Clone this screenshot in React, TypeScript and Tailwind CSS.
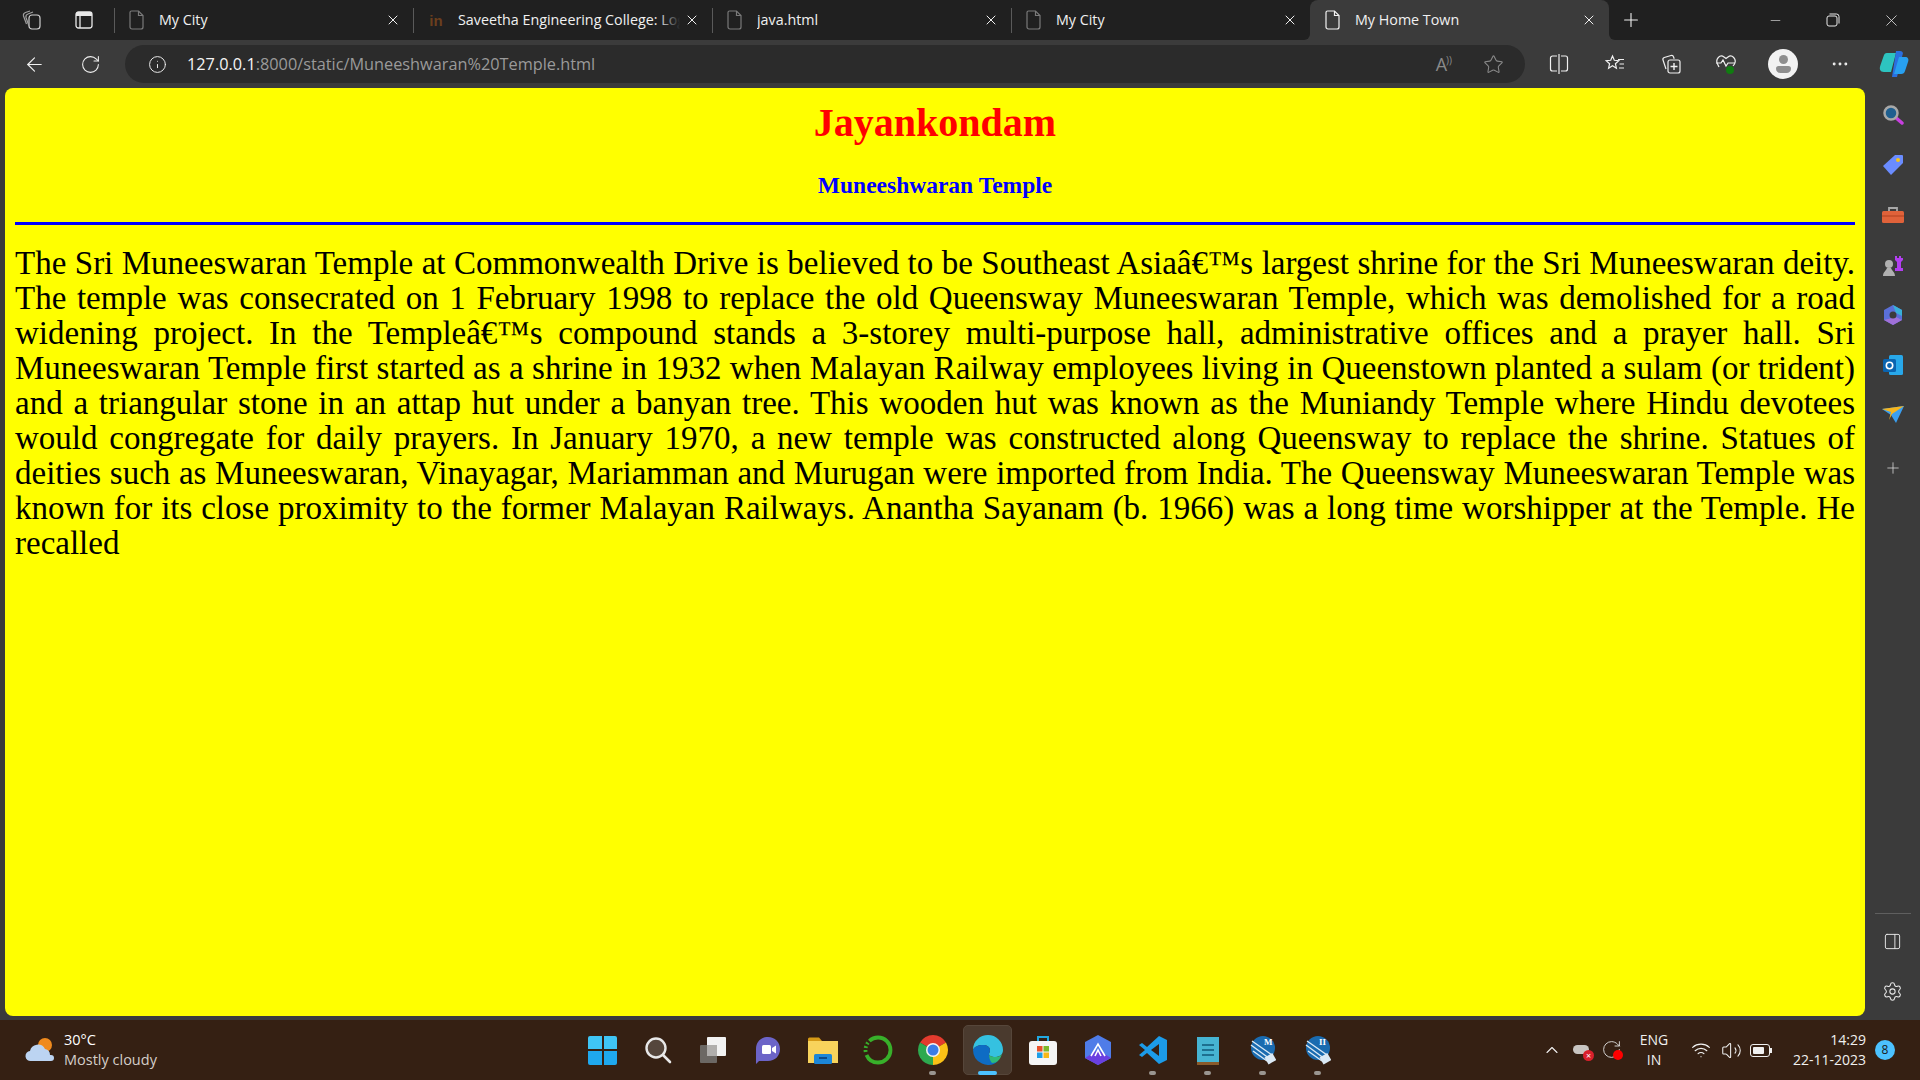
import React from "react";
import { ArrowLeft, RotateCw, Info, Star, X, Plus, Minus, ChevronUp, Wifi, Volume2, Ellipsis, Settings, PanelRight } from "lucide-react";

const ui = "font-['Open_Sans','Noto_Sans',sans-serif]";

const lines = [
  "The Sri Muneeswaran Temple at Commonwealth Drive is believed to be Southeast Asiaâ€™s largest shrine for the Sri Muneeswaran deity.",
  "The temple was consecrated on 1 February 1998 to replace the old Queensway Muneeswaran Temple, which was demolished for a road",
  "widening project. In the Templeâ€™s compound stands a 3-storey multi-purpose hall, administrative offices and a prayer hall. Sri",
  "Muneeswaran Temple first started as a shrine in 1932 when Malayan Railway employees living in Queenstown planted a sulam (or trident)",
  "and a triangular stone in an attap hut under a banyan tree. This wooden hut was known as the Muniandy Temple where Hindu devotees",
  "would congregate for daily prayers. In January 1970, a new temple was constructed along Queensway to replace the shrine. Statues of",
  "deities such as Muneeswaran, Vinayagar, Mariamman and Murugan were imported from India. The Queensway Muneeswaran Temple was",
  "known for its close proximity to the former Malayan Railways. Anantha Sayanam (b. 1966) was a long time worshipper at the Temple. He",
];

const DocIcon = ({ active }: { active?: boolean }) => (
  <svg width="16" height="20" viewBox="0 0 16 20" fill="none" stroke={active ? "#f2f2f2" : "#7a7a7a"} strokeWidth="1.2">
    <path d="M2.5 1h7l4.500 4.500V17a2 2 0 0 1-2 2H3a2 2 0 0 1-2-2V2.500A1.500 1.500 0 0 1 2.500 1z" />
    <path d="M9.500 1v4.500H14" />
  </svg>
);

const Tab = ({ title, active, sep = true, fade, icon }: { title: string; active?: boolean; sep?: boolean; fade?: boolean; icon?: React.ReactNode }) => (
  <div className={`relative w-[299px] h-[40px] shrink-0 ${active ? "bg-[#202020]" : ""}`}>
    <div className={`relative flex items-center h-full pl-[15px] pr-[12px] ${active ? "bg-[#3b3b3b] rounded-t-[8px]" : ""}`}>
      {sep && <div className="absolute left-0 top-[8px] h-[25px] w-px bg-[#5a5a5a]" />}
      <div className="w-[16px] flex justify-center shrink-0">{icon ?? <DocIcon active={active} />}</div>
      <div className="relative flex-1 ml-[14px] overflow-hidden whitespace-nowrap text-[14.300px] text-[#f0f0f0]">
        {title}
        {fade && <div className="absolute right-0 top-0 h-full w-[22px] bg-gradient-to-r from-transparent to-[#202020]" />}
      </div>
      <X size={16} strokeWidth={1.500} className="shrink-0 ml-[4px] text-[#f0f0f0]" />
    </div>
  </div>
);

const Sq = ({ children, w = 22, h = 22 }: { children: React.ReactNode; w?: number; h?: number }) => (
  <svg width={w} height={h} viewBox={`0 0 ${w} ${h}`} fill="none">{children}</svg>
);

const Side = ({ children }: { children: React.ReactNode }) => (
  <div className="h-[50px] flex items-center justify-center">{children}</div>
);

const Cell = ({ children, dot, active }: { children: React.ReactNode; dot?: boolean; active?: boolean }) => (
  <div className="relative w-[55px] h-[54px] flex items-center justify-center shrink-0">
    {active && <div className="absolute left-[3px] top-[2px] w-[49px] h-[50px] rounded-[5px] bg-[#4a3a2e] border border-[#56463a]" />}
    <div className="relative">{children}</div>
    {dot && <div className="absolute left-[24px] bottom-[2px] w-[7px] h-[4px] rounded-full bg-[#9a9590]" />}
    {active && <div className="absolute left-[18px] bottom-[2px] w-[19px] h-[4px] rounded-full bg-[#4cc2ff]" />}
  </div>
);

export default function App() {
  return (
    <div className={`w-[1920px] h-[1080px] overflow-hidden flex flex-col bg-[#3b3b3b] ${ui}`}>
      {/* Tab strip */}
      <div className="h-[40px] flex shrink-0">
        <div className="flex bg-[#202020] rounded-br-[6px]">
          <div className="w-[114px] flex items-center shrink-0">
            <div className="w-[64px] flex justify-center">
              <Sq>
                <rect x="8" y="6" width="11" height="14" rx="3" stroke="#d0d0d0" strokeWidth="1.200" />
                <path d="M8 17 5 8.500a3 3 0 0 1 2-3.500l5-2M5.500 15 2.500 7a3 3 0 0 1 2-3.500L9 2" stroke="#a0a0a0" strokeWidth="1.200" />
              </Sq>
            </div>
            <div className="w-[40px] flex justify-center">
              <Sq w={20} h={20}>
                <rect x="2" y="2" width="16" height="16" rx="2.500" stroke="#e8e8e8" strokeWidth="1.300" />
                <path d="M2 3.500a1.500 1.500 0 0 1 1.500-1.500h13a1.500 1.500 0 0 1 1.500 1.500V6H2z" fill="#e8e8e8" />
                <path d="M6 6v12" stroke="#e8e8e8" strokeWidth="1.300" />
              </Sq>
            </div>
          </div>
          <Tab title="My City" />
          <Tab
            title="Saveetha Engineering College: Login"
            fade
            icon={<span className="font-['Liberation_Sans',sans-serif] font-bold text-[15px] text-[#6b3f1d] leading-none">in</span>}
          />
          <Tab title="java.html" />
          <Tab title="My City" />
        </div>
        <Tab title="My Home Town" active sep={false} />
        <div className="flex-1 flex bg-[#202020] rounded-bl-[6px]">
          <div className="w-[44px] flex items-center justify-center shrink-0">
            <Plus size={22} strokeWidth={1.200} className="text-[#f0f0f0]" />
          </div>
          <div className="flex-1 flex items-center justify-end text-[#e8e8e8]">
            <div className="w-[58px] flex justify-center"><Minus size={15} strokeWidth={1} /></div>
            <div className="w-[58px] flex justify-center">
              <Sq w={14} h={14}>
                <rect x="1" y="3" width="10" height="10" rx="2" stroke="#e8e8e8" />
                <path d="M3.500 1h7A2.500 2.500 0 0 1 13 3.500v7" stroke="#e8e8e8" />
              </Sq>
            </div>
            <div className="w-[58px] flex justify-center"><X size={19} strokeWidth={1} /></div>
          </div>
        </div>
      </div>

      {/* Toolbar */}
      <div className="h-[48px] flex items-center shrink-0 text-[#f0f0f0]">
        <div className="w-[56px] ml-[6px] flex justify-center"><ArrowLeft size={23} strokeWidth={1.200} /></div>
        <div className="w-[56px] flex justify-center"><RotateCw size={21} strokeWidth={1.200} /></div>
        <div className="w-[1400px] ml-[7px] h-[38px] rounded-full bg-[#2b2b2b] flex items-center pl-[23px] pr-[21px] shrink-0">
          <Info size={19} strokeWidth={1.200} />
          <div className="ml-[20px] text-[16.300px] whitespace-nowrap text-[#9a9a9a]">
            <span className="text-[#f5f5f5]">127.0.0.1</span>:8000/static/Muneeshwaran%20Temple.html
          </div>
          <div className="ml-auto flex items-center gap-[31px] text-[#8a8a8a]">
            <div className="flex items-start text-[18px] leading-none">A<span className="text-[10px] -ml-[1px]">))</span></div>
            <Star size={21} strokeWidth={1.200} />
          </div>
        </div>
        <div className="flex items-center flex-1">
          <div className="w-[56px] ml-[6px] flex justify-center">
            <Sq>
              <path d="M9 3H4.500A2 2 0 0 0 2.500 5v11a2 2 0 0 0 2 2H9M13 3h4.500a2 2 0 0 1 2 2v11a2 2 0 0 1-2 2H13M11 1v20" stroke="#f0f0f0" strokeWidth="1.200" />
            </Sq>
          </div>
          <div className="w-[56px] flex justify-center">
            <Sq>
              <path d="M8.500 3l1.800 4.300 4.500.4-3.400 3 1 4.500-3.900-2.400-3.900 2.400 1-4.500-3.400-3 4.500-.4z" stroke="#f0f0f0" strokeWidth="1.200" />
              <path d="M14 6.500h6M15.500 11h4.500M15 15h5" stroke="#f0f0f0" strokeWidth="1.200" />
            </Sq>
          </div>
          <div className="w-[56px] flex justify-center">
            <Sq>
              <path d="M6 16 3 7a2 2 0 0 1 1.300-2.500L11 2.500a2 2 0 0 1 2.500 1.300l.7 2" stroke="#f0f0f0" strokeWidth="1.200" />
              <rect x="8" y="7" width="12" height="13" rx="2" stroke="#f0f0f0" strokeWidth="1.200" />
              <path d="M14 10v7M10.500 13.500h7" stroke="#f0f0f0" strokeWidth="1.400" />
            </Sq>
          </div>
          <div className="w-[54px] flex justify-center">
            <Sq>
              <path d="M4 14 2.500 11C0 6 5 1 9 4l2 1.500L13 4c4-3 9 2 6.500 7L18 13" stroke="#f0f0f0" strokeWidth="1.200" />
              <path d="M1 10h5l2-3 3 6 2-3h7" stroke="#f0f0f0" strokeWidth="1.200" />
              <circle cx="15" cy="17" r="4" fill="#107c10" />
            </Sq>
          </div>
          <div className="w-[30px] h-[30px] ml-[15px] rounded-full bg-[#f2f2f2] flex flex-col items-center justify-center gap-[2px]">
            <div className="w-[9px] h-[9px] rounded-full bg-[#8e8e8e]" />
            <div className="w-[15px] h-[7px] rounded-t-[3px] rounded-b-[5px] bg-[#8e8e8e]" />
          </div>
          <div className="w-[56px] ml-[14px] flex justify-center"><Ellipsis size={20} strokeWidth={1.500} /></div>
          <div className="w-[30px] ml-[11px] flex justify-center">
            <Sq w={30} h={28}>
              <path d="M8 3h9l-5 19H5C1 22 0 19 1.500 15L5 5a3 3 0 0 1 3-2z" fill="#2dc4c0" />
              <path d="M17 1h4a3 3 0 0 1 3 2l-6 24h-5z" fill="#2a6fe0" />
              <path d="M20 7h6c3 0 4 2 3 5l-3 9a4 4 0 0 1-4 3h-7z" fill="#28a0f0" />
            </Sq>
          </div>
        </div>
      </div>

      {/* Page + sidebar */}
      <div className="flex h-[928px] shrink-0">
        <div className="w-[1860px] ml-[5px] rounded-[8px] bg-[#ffff00] px-[10px] font-['Liberation_Serif',serif] overflow-hidden">
          <h1 className="text-center font-bold text-[#ff0000] text-[40px] leading-[44px] mt-[13px]">Jayankondam</h1>
          <h2 className="text-center font-bold text-[#0000ff] text-[23.500px] leading-[28px] mt-[26px]">Muneeshwaran Temple</h2>
          <div className="h-[3px] bg-[#0000ff] mt-[23px]" />
          <div className="mt-[21px] text-[33px] leading-[35px] text-black">
            {lines.map((l) => (
              <div key={l} className="text-justify [text-align-last:justify] whitespace-nowrap">{l}</div>
            ))}
            <div>recalled</div>
          </div>
        </div>
        <div className="flex-1 flex flex-col items-center pt-[2px]">
          <Side>
            <Sq>
              <path d="m13 13 7 6" stroke="#c83fe0" strokeWidth="3.500" strokeLinecap="round" />
              <circle cx="9" cy="9" r="6.500" fill="#1f5f8f" stroke="#a8a8a8" strokeWidth="2.500" />
            </Sq>
          </Side>
          <Side>
            <Sq>
              <path d="M13 1h7a1 1 0 0 1 1 1v7L9 21 1 12z" fill="#6a8cff" />
              <circle cx="16" cy="6" r="2" fill="#f5c518" />
            </Sq>
          </Side>
          <Side>
            <Sq w={24} h={22}>
              <path d="M8 7V4h8v3" stroke="#a8a8a8" strokeWidth="1.800" />
              <rect x="1" y="7" width="22" height="12" rx="1.500" fill="#e0623a" />
              <path d="M1 12h22" stroke="#b0401f" />
            </Sq>
          </Side>
          <Side>
            <Sq w={24} h={24}>
              <circle cx="8" cy="11" r="4" fill="#b0b0b0" />
              <path d="M2 23c0-4 3-5 4-8h4c1 3 4 4 4 8z" fill="#b0b0b0" />
              <path d="M14 3h2v2h2V3h2v2h2V3v0h0v4l-2 2v6h2v3H14v-3h2V9l-2-2z" fill="#b23ff0" />
            </Sq>
          </Side>
          <Side>
            <Sq>
              <path d="M11 1 20 6v10l-9 5-9-5V6z" fill="#5a6fd8" />
              <path d="M11 1 20 6v6l-6-3z" fill="#38b0d8" />
              <path d="M2 16l9 5 9-5-6-3z" fill="#a070d8" />
              <circle cx="11" cy="11" r="3.500" fill="#3b3b3b" />
            </Sq>
          </Side>
          <Side>
            <Sq>
              <rect x="7" y="1" width="14" height="20" rx="1.500" fill="#28a8ea" />
              <rect x="1" y="5" width="13" height="13" rx="1.500" fill="#0a64b0" />
              <circle cx="7.500" cy="11.500" r="3.200" stroke="#fff" strokeWidth="1.600" />
            </Sq>
          </Side>
          <Side>
            <Sq>
              <path d="M0 5 22 2 14 19 9 11z" fill="#3a9ff0" />
              <path d="M0 5 9 8l-2 8 3-6 12-8z" fill="#f5b51e" />
            </Sq>
          </Side>
          <div className="h-[50px] mt-[3px] flex items-center justify-center"><Plus size={18} strokeWidth={1} className="text-[#e0e0e0]" /></div>
          <div className="mt-auto w-[36px] h-px bg-[#5f5f5f]" />
          <div className="h-[50px] mt-[2px] flex items-center"><PanelRight size={19} strokeWidth={1.200} className="text-[#e8e8e8]" /></div>
          <div className="h-[50px] flex items-center"><Settings size={21} strokeWidth={1.200} className="text-[#e8e8e8]" /></div>
        </div>
      </div>

      <div className="h-[4px] shrink-0" />

      {/* Taskbar */}
      <div className="flex-1 bg-[#352013] flex items-center text-white relative">
        <div className="w-[575px] flex items-center pl-[24px] shrink-0">
          <Sq w={32} h={30}>
            <circle cx="21" cy="10" r="7" fill="#f08a1d" />
            <path d="M7 26a5 5 0 0 1-1-10 8 8 0 0 1 15-2 6 6 0 0 1 5 6h1a3 3 0 0 1 0 6z" fill="#bcd4f2" />
          </Sq>
          <div className="ml-[8px] text-[14.500px] leading-[20px]">
            <div>30°C</div>
            <div className="text-[#d4cec9]">Mostly cloudy</div>
          </div>
        </div>
        <div className="flex">
          <Cell>
            <div className="grid grid-cols-2 gap-[2px] w-[29px] h-[29px]">
              <div className="bg-[#3fc5f5] rounded-tl-[2px]" />
              <div className="bg-[#3fc5f5] rounded-tr-[2px]" />
              <div className="bg-[#1fa8ee] rounded-bl-[2px]" />
              <div className="bg-[#1fa8ee] rounded-br-[2px]" />
            </div>
          </Cell>
          <Cell>
            <Sq w={28} h={28}>
              <circle cx="12" cy="12" r="9.500" fill="#55463c" stroke="#e8e8e8" strokeWidth="2.400" />
              <path d="m19 19 7 7" stroke="#e8e8e8" strokeWidth="2.600" strokeLinecap="round" />
            </Sq>
          </Cell>
          <Cell>
            <Sq w={30} h={28}>
              <rect x="2" y="9" width="17" height="18" rx="1" fill="#6c6864" />
              <rect x="9" y="1" width="19" height="19" rx="1" fill="#f2f2f2" />
              <rect x="9" y="9" width="10" height="11" fill="#b0aeac" />
            </Sq>
          </Cell>
          <Cell>
            <Sq w={28} h={30}>
              <path d="M14 2c7 0 12 5 12 12s-5 12-12 12H5l-3 3v-15C2 7 7 2 14 2z" fill="#6c64c8" />
              <rect x="8" y="10" width="9" height="9" rx="1.500" fill="#fff" />
              <path d="m18 13 4-2.500v8L18 16z" fill="#fff" />
            </Sq>
          </Cell>
          <Cell>
            <Sq w={30} h={28}>
              <path d="M0 3a1.500 1.500 0 0 1 1.500-1.500H11L14 5H0z" fill="#d69a16" />
              <rect x="0" y="5" width="30" height="22" fill="#f8d35c" />
              <rect x="6" y="18" width="18" height="10" rx="1.500" fill="#1c86d8" />
              <path d="M11 22h8" stroke="#0c4a8a" strokeWidth="2" />
            </Sq>
          </Cell>
          <Cell>
            <Sq w={30} h={30}>
              <circle cx="15" cy="15" r="12.500" stroke="#38b02a" strokeWidth="3.800" strokeDasharray="34 3 2 2 2 2 2 2" />
            </Sq>
          </Cell>
          <Cell dot>
            <Sq w={30} h={30}>
              <path d="M15 15 27.990 7.500A15 15 0 0 0 2.010 7.500z" fill="#e33b2e" />
              <path d="M15 15 2.010 7.500A15 15 0 0 0 15 30z" fill="#2da94f" />
              <path d="M15 15 27.990 7.500A15 15 0 0 1 15 30z" fill="#fbc116" />
              <circle cx="15" cy="15" r="7" fill="#f5f5f5" />
              <circle cx="15" cy="15" r="5.500" fill="#3b7de8" />
            </Sq>
          </Cell>
          <Cell active>
            <Sq w={30} h={30}>
              <path d="M15 0a15 15 0 0 1 15 15c0 5-4 7-8 7-3 0-6-1-6-3 0-1 1-2 1-4 0-3-3-5-7-5C5 10 1 12 0 15 0 6 7 0 15 0z" fill="#35c1e0" />
              <path d="M0 15c1-3 5-5 10-5 4 0 7 2 7 5 0 2-1 3-1 4 0 5 5 8 9 7a15 15 0 0 1-25-11z" fill="#0e6cc4" />
              <path d="M16 19c0 2 3 3 6 3 3 0 6-1 7-3-2 6-5 9-10 9-2-2-3-5-3-9z" fill="#2dbb7a" />
            </Sq>
          </Cell>
          <Cell>
            <Sq w={30} h={32}>
              <path d="M10 7V3h10v4" stroke="#22a8e0" strokeWidth="2" />
              <rect x="1" y="7" width="28" height="24" rx="3" fill="#f5f5f5" />
              <rect x="9" y="12" width="5.500" height="5.500" fill="#e8512a" />
              <rect x="15.500" y="12" width="5.500" height="5.500" fill="#7db82a" />
              <rect x="9" y="18.500" width="5.500" height="5.500" fill="#1e9fe8" />
              <rect x="15.500" y="18.500" width="5.500" height="5.500" fill="#f8b816" />
            </Sq>
          </Cell>
          <Cell>
            <Sq w={28} h={30}>
              <path d="M14 0 27 7v16l-13 7-13-7V7z" fill="#4f7ce8" />
              <path d="M14 15 27 23l-13 7-13-7z" fill="#6a3fe0" />
              <path d="m7 21 7-12 7 12M11 21l3-6 3 6" stroke="#fff" strokeWidth="1.600" />
            </Sq>
          </Cell>
          <Cell dot>
            <Sq w={30} h={30}>
              <path d="M21 1 29 5v20l-8 4-12-11-5 4-3-2 6-5-6-5 3-2 5 4z" fill="#1c9be8" />
              <path d="M21 9v12l-8-6z" fill="#352013" />
            </Sq>
          </Cell>
          <Cell dot>
            <Sq w={24} h={30}>
              <rect x="1" y="2" width="22" height="25" fill="#46b4d2" />
              <rect x="1" y="27" width="22" height="3" fill="#8a5a2a" />
              <path d="M6 10h12M6 15h12M6 20h12" stroke="#1d6f8f" strokeWidth="2" />
            </Sq>
          </Cell>
          <Cell dot>
            <Sq w={26} h={30}>
              <circle cx="13" cy="13" r="12" fill="#1a6bb0" />
              <path d="M1 10 20 24M3 16l14 10M2 6l20 14" stroke="#dbe9f5" strokeWidth="1.400" />
              <text x="14" y="10" fontSize="9" fontWeight="700" fontFamily="Liberation Serif" fill="#fff">M</text>
              <rect x="16" y="20" width="9" height="8" fill="#dbe9f5" transform="rotate(-30 20 24)" />
            </Sq>
          </Cell>
          <Cell dot>
            <Sq w={26} h={30}>
              <circle cx="13" cy="13" r="12" fill="#1a6bb0" />
              <path d="M1 10 20 24M3 16l14 10M2 6l20 14" stroke="#dbe9f5" strokeWidth="1.400" />
              <text x="14" y="10" fontSize="9" fontWeight="700" fontFamily="Liberation Serif" fill="#fff">II</text>
              <rect x="16" y="20" width="9" height="8" fill="#dbe9f5" transform="rotate(-30 20 24)" />
            </Sq>
          </Cell>
        </div>
        <div className="flex-1 flex items-center pl-[197px]">
          <ChevronUp size={20} strokeWidth={1.300} className="shrink-0 text-[#f0f0f0]" />
          <div className="relative ml-[11px] w-[20px] h-[18px] shrink-0">
            <div className="absolute left-0 top-[4px] w-[16px] h-[9px] rounded-full bg-[#c9c5c2]" />
            <div className="absolute right-[-1px] bottom-[-2px] w-[11px] h-[11px] rounded-full bg-[#d9202c] text-[9px] leading-[11px] text-center text-white">×</div>
          </div>
          <div className="relative ml-[8px] w-[22px] h-[22px] shrink-0">
            <RotateCw size={21} strokeWidth={1} className="text-[#e8e8e8]" />
            <div className="absolute right-0 bottom-[1px] w-[10px] h-[10px] rounded-full bg-[#ff0000]" />
          </div>
          <div className="ml-[12px] w-[38px] text-center text-[14px] leading-[20px] shrink-0 text-[#f0f0f0]">
            <div>ENG</div>
            <div>IN</div>
          </div>
          <Wifi size={20} strokeWidth={1.400} className="ml-[18px] shrink-0 text-[#f0f0f0]" />
          <Volume2 size={21} strokeWidth={1.200} className="ml-[10px] shrink-0 text-[#f0f0f0]" />
          <div className="relative ml-[8px] w-[20px] h-[13px] rounded-[3px] border border-[#f0f0f0] p-[2px] shrink-0">
            <div className="w-[11px] h-full bg-[#f0f0f0] rounded-[1px]" />
            <div className="absolute -right-[3px] top-[3px] w-[2px] h-[5px] bg-[#f0f0f0]" />
          </div>
          <div className="ml-auto text-right text-[14px] leading-[20px] text-[#f0f0f0] whitespace-nowrap">
            <div>14:29</div>
            <div>22-11-2023</div>
          </div>
          <div className="ml-[9px] mr-[25px] w-[20px] h-[20px] rounded-full bg-[#4cc2ff] text-[12px] leading-[20px] text-center text-[#1a1a1a] shrink-0">8</div>
        </div>
      </div>
    </div>
  );
}
